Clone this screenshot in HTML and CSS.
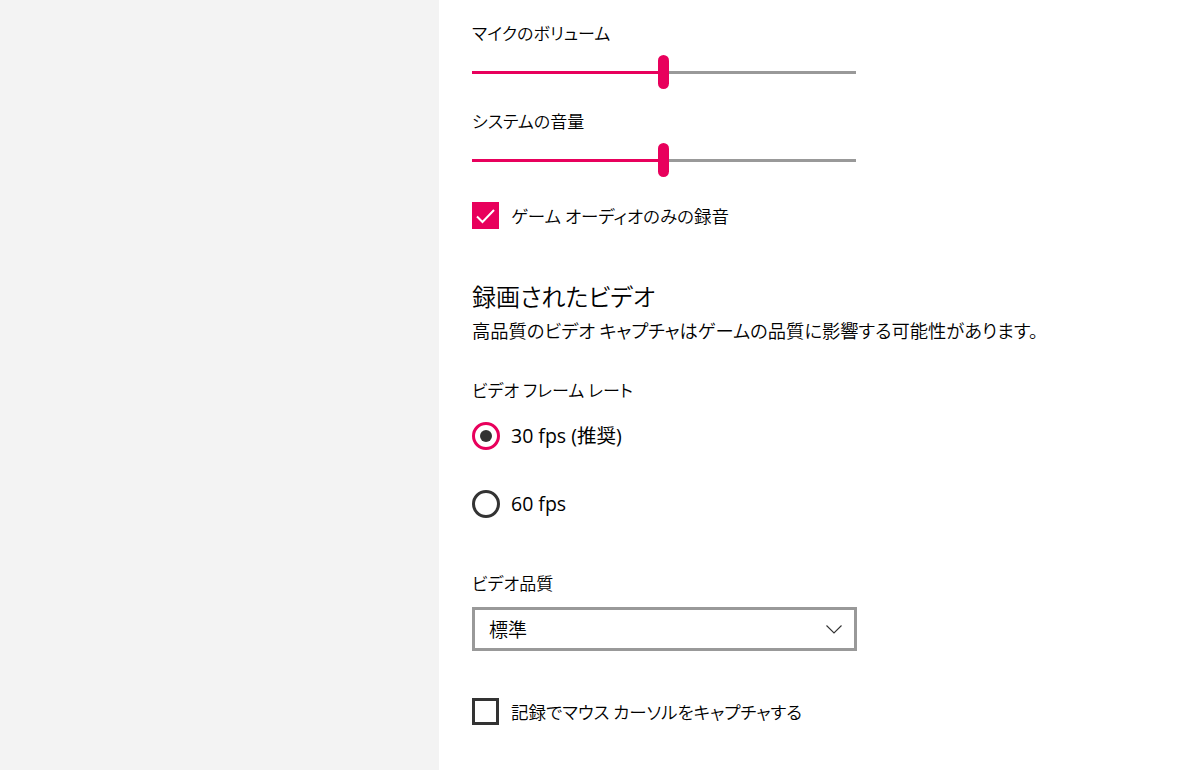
FILE: index.html
```html
<!DOCTYPE html>
<html lang="ja">
<head>
<meta charset="utf-8">
<link rel="stylesheet" href="styles.css">
</head>
<body>
<div class="page">
  <aside class="sidebar"></aside>
  <main class="content">
    <div class="label first">マイクのボリューム</div>
    <div class="slider">
      <div class="track"><div class="fill" style="width:50%"></div></div>
      <div class="thumb" style="left:50%"></div>
    </div>
    <div class="label second">システムの音量</div>
    <div class="slider">
      <div class="track"><div class="fill" style="width:50%"></div></div>
      <div class="thumb" style="left:50%"></div>
    </div>
    <div class="check-row checked-row">
      <span class="checkbox checked">
        <svg viewBox="0 0 27 27" width="27" height="27"><path d="M5 14.5 L10.5 20 L22 8" fill="none" stroke="#fff" stroke-width="2"/></svg>
      </span>
      <span class="check-text">ゲーム オーディオのみの録音</span>
    </div>
    <h2 class="heading">録画されたビデオ</h2>
    <p class="desc">高品質のビデオ キャプチャはゲームの品質に影響する可能性があります。</p>
    <div class="label third">ビデオ フレーム レート</div>
    <div class="radio-row r1">
      <span class="radio selected"><span class="dot"></span></span>
      <span class="radio-text">30 fps (推奨)</span>
    </div>
    <div class="radio-row r2">
      <span class="radio"></span>
      <span class="radio-text">60 fps</span>
    </div>
    <div class="label fourth">ビデオ品質</div>
    <div class="dropdown">
      <span class="dd-text">標準</span>
      <svg class="chev" viewBox="0 0 16 9" width="16" height="9"><path d="M0.5 0.5 L8 8 L15.5 0.5" fill="none" stroke="#333" stroke-width="1.1"/></svg>
    </div>
    <div class="check-row last-row">
      <span class="checkbox"></span>
      <span class="check-text">記録でマウス カーソルをキャプチャする</span>
    </div>
  </main>
</div>
</body>
</html>
```

FILE: styles.css
```css
html, body {
  margin: 0;
  padding: 0;
  background: #ffffff;
}
body {
  font-family: "Noto Sans CJK JP", "Noto Sans", sans-serif;
  font-feature-settings: "palt";
  font-weight: 350;
  color: #000;
  width: 1200px;
  height: 770px;
  overflow: hidden;
}
.page {
  display: flex;
  height: 770px;
}
.sidebar {
  width: 439px;
  flex: none;
  background: #f3f3f3;
}
.content {
  padding-left: 33px;
  width: 640px;
}
.label {
  font-size: 17px;
  line-height: 24px;
  height: 24px;
}
.label.first { margin-top: 21px; }
.label.second { margin-top: 20px; }
.label.third { margin-top: 36px; }
.label.fourth { margin-top: 53px; }

.slider {
  position: relative;
  width: 384px;
  height: 34px;
  margin-top: 10px;
  display: flex;
  align-items: center;
}
.track {
  width: 100%;
  height: 3px;
  background: #999999;
}
.fill {
  height: 100%;
  background: #e8005c;
}
.thumb {
  position: absolute;
  top: 0;
  width: 11px;
  height: 34px;
  margin-left: -6px;
  border-radius: 6px;
  background: #e8005c;
}

.check-row {
  display: flex;
  align-items: center;
  height: 27px;
}
.checked-row { margin-top: 25px; }
.last-row { margin-top: 47px; }
.checkbox {
  width: 27px;
  height: 27px;
  box-sizing: border-box;
  border: 3px solid #333;
  flex: none;
  display: flex;
}
.checkbox.checked {
  border: none;
  background: #e8005c;
}
.check-text {
  margin-left: 12px;
  font-size: 17.5px;
  line-height: 24px;
}

.heading {
  margin: 51px 0 0 0;
  font-size: 24px;
  font-weight: 350;
  line-height: 32px;
  height: 32px;
}
.desc {
  margin: 6px 0 0 0;
  font-size: 18.3px;
  line-height: 24px;
  white-space: nowrap;
}

.radio-row {
  display: flex;
  align-items: center;
  height: 28px;
}
.r1 { margin-top: 20px; }
.r2 { margin-top: 40px; }
.radio {
  width: 28px;
  height: 28px;
  box-sizing: border-box;
  border: 3px solid #333;
  border-radius: 50%;
  flex: none;
  display: flex;
  align-items: center;
  justify-content: center;
}
.radio.selected { border-color: #e8005c; }
.dot {
  width: 12px;
  height: 12px;
  border-radius: 50%;
  background: #333;
}
.radio-text {
  margin-left: 11px;
  font-family: "Open Sans", "Noto Sans CJK JP", sans-serif;
  font-weight: 400;
  font-size: 19.5px;
  line-height: 24px;
}

.dropdown {
  margin-top: 12px;
  width: 385px;
  height: 44px;
  box-sizing: border-box;
  border: 3px solid #999999;
  display: flex;
  align-items: center;
  justify-content: space-between;
  padding: 0 12px 0 14px;
}
.dd-text {
  font-size: 19px;
  line-height: 24px;
}
.chev { display: block; }
```
